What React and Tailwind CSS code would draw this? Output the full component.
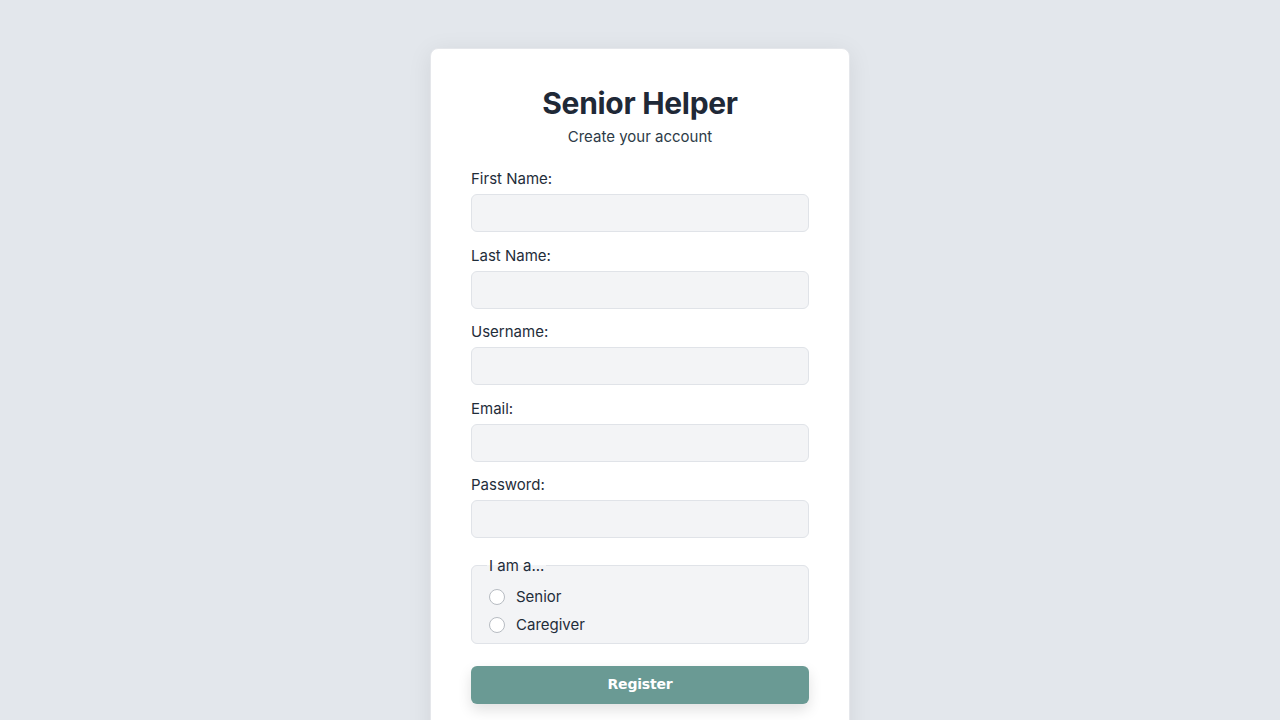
import { useState } from "react";

const fields = [
    { id: "firstName", label: "First Name:", type: "text" },
    { id: "lastName", label: "Last Name:", type: "text" },
    { id: "username", label: "Username:", type: "text" },
    { id: "email", label: "Email:", type: "email" },
    { id: "password", label: "Password:", type: "password" },
];

export default function App() {
    const [form, setForm] = useState({});
    const [role, setRole] = useState("");

    return (
        <div className="min-h-screen bg-[#e3e7ec] flex justify-center pt-12 font-['Inter',sans-serif] text-[#1f2d3a]">
            <div className="w-[420px] h-fit bg-white rounded-lg border border-[#e5e7eb] shadow-[0_4px_24px_rgba(0,0,0,0.08)] px-10 pt-9 pb-10">
                <h1 className="text-[30px] leading-9 font-bold text-center text-[#1f2937] tracking-[-0.3px]">Senior Helper</h1>
                <p className="text-[15px] leading-6 text-center text-[#2d3b47] mt-[4px]">Create your account</p>

                <form className="mt-[19px]" onSubmit={(e) => e.preventDefault()}>
                    {fields.map((f) => (
                        <div key={f.id} className="mb-[12.5px]">
                            <label htmlFor={f.id} className="block text-[15px] leading-[22px] mb-[4px]">
                                {f.label}
                            </label>
                            <input
                                id={f.id}
                                type={f.type}
                                value={form[f.id] || ""}
                                onChange={(e) => setForm({ ...form, [f.id]: e.target.value })}
                                className="block w-full h-[38px] bg-[#f3f4f6] border border-[#e0e3e8] rounded-md px-3 outline-none"
                            />
                        </div>
                    ))}

                    <fieldset className="mt-[19.5px] bg-[#f3f4f6] border border-[#e0e3e8] rounded-md px-[17px] pb-[4px] pt-[10px]">
                        <legend className="-ml-[2px] px-[2px] text-[15px] leading-none">I am a...</legend>
                        {["Senior", "Caregiver"].map((r) => (
                            <label key={r} className="flex items-center gap-[11px] text-[15px] leading-[28px] cursor-pointer">
                                <input
                                    type="radio"
                                    name="role"
                                    checked={role === r}
                                    onChange={() => setRole(r)}
                                    className="appearance-none w-4 h-4 rounded-full border border-[#b7bcc2] bg-white checked:border-[5px] checked:border-[#6a9a94]"
                                />
                                {r}
                            </label>
                        ))}
                    </fieldset>

                    <button
                        type="submit"
                        className="mt-[22px] w-full h-[38px] rounded-md bg-[#6a9a94] text-white text-[14px] font-bold font-['DejaVu_Sans',sans-serif] tracking-[-0.2px] shadow-[0_6px_14px_rgba(0,0,0,0.12)]"
                    >
                        Register
                    </button>
                </form>
            </div>
        </div>
    );
}
